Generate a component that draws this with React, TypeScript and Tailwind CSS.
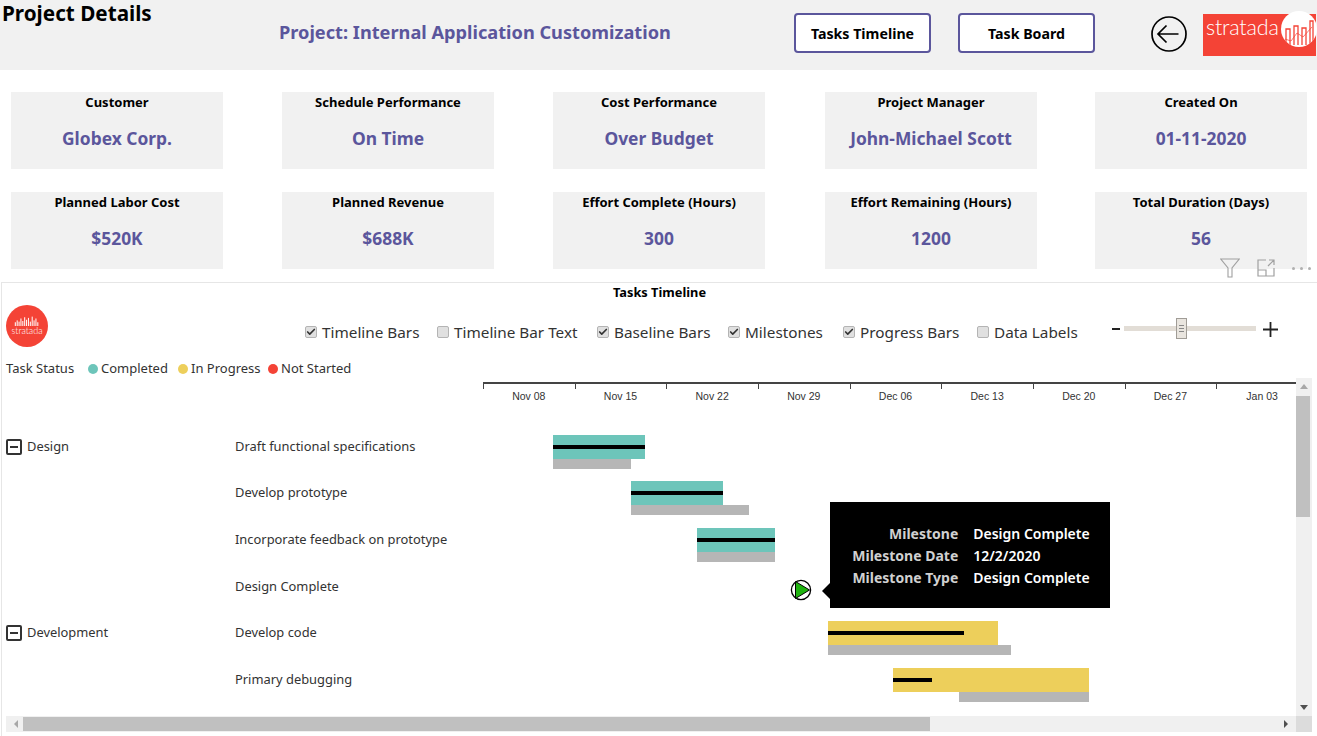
import * as React from "react";
import { Check } from "lucide-react";

const kpis = [
  { label: "Customer", value: "Globex Corp." },
  { label: "Schedule Performance", value: "On Time" },
  { label: "Cost Performance", value: "Over Budget" },
  { label: "Project Manager", value: "John-Michael Scott" },
  { label: "Created On", value: "01-11-2020" },
  { label: "Planned Labor Cost", value: "$520K" },
  { label: "Planned Revenue", value: "$688K" },
  { label: "Effort Complete (Hours)", value: "300" },
  { label: "Effort Remaining (Hours)", value: "1200" },
  { label: "Total Duration (Days)", value: "56" },
];

const toggles = [
  { label: "Timeline Bars", checked: true, width: "w-[132px]" },
  { label: "Timeline Bar Text", checked: false, width: "w-[160px]" },
  { label: "Baseline Bars", checked: true, width: "w-[131px]" },
  { label: "Milestones", checked: true, width: "w-[115px]" },
  { label: "Progress Bars", checked: true, width: "w-[134px]" },
  { label: "Data Labels", checked: false, width: "w-[120px]" },
];

const dates = ["Nov 08", "Nov 15", "Nov 22", "Nov 29", "Dec 06", "Dec 13", "Dec 20", "Dec 27", "Jan 03"];

const TEAL = "#6dc5ba";
const YELLOW = "#edcf5b";

// x values are relative to the start of the time axis
const rows = [
  { group: "Design", task: "Draft functional specifications", h: "h-[46px]", color: TEAL, bar: [70, 92], progress: 92, base: [70, 78] },
  { group: "", task: "Develop prototype", h: "h-[47px]", color: TEAL, bar: [148, 92], progress: 92, base: [148, 118] },
  { group: "", task: "Incorporate feedback on prototype", h: "h-[47px]", color: TEAL, bar: [214, 78], progress: 78, base: [214, 78] },
  { group: "", task: "Design Complete", h: "h-[46px]", milestone: true },
  { group: "Development", task: "Develop code", h: "h-[47px]", color: YELLOW, bar: [345, 170], progress: 136, base: [345, 183] },
  { group: "", task: "Primary debugging", h: "h-[47px]", color: YELLOW, bar: [410, 196], progress: 39, base: [476, 130] },
];

function Wordmark({ className }: { className: string }) {
  return <span className={className} style={{ fontFamily: "Lato, sans-serif", fontWeight: 300 }}>stratada</span>;
}

function Skyline({ color, className }: { color: string; className: string }) {
  const heights = [6, 9, 7, 12, 8, 14, 10, 13, 7, 15, 9, 12, 6];
  return (
    <svg viewBox="0 0 39 16" className={className}>
      {heights.map((h, i) => (
        <rect key={i} x={i * 3} y={16 - h} width="1.6" height={h} fill={color} />
      ))}
    </svg>
  );
}

function LogoBars() {
  return (
    <svg viewBox="0 0 30 26" className="h-[26px] w-[30px]" fill="none" stroke="#f44336" strokeWidth="1.3">
      <path d="M2 26V10h4v16M10 26V7h4v19M18 26V9h4v17M26 26V2h3v24" />
      <path d="M1 20l6 2 6-8 6 4 9-10" strokeWidth="0.7" />
    </svg>
  );
}

function ToggleBox({ checked }: { checked: boolean }) {
  return (
    <span className="mr-[5px] flex h-[12px] w-[12px] shrink-0 items-center justify-center rounded-[2px] border border-[#b4b4b4] bg-[#e0e0e0]">
      {checked && <Check className="h-[10px] w-[10px] text-[#333333]" strokeWidth={4} />}
    </span>
  );
}

function GroupBox() {
  return (
    <span className="mr-[5px] flex h-[16px] w-[16px] items-center justify-center rounded-[2px] border-2 border-[#333333]">
      <span className="h-[2px] w-[8px] bg-[#333333]" />
    </span>
  );
}

function Milestone() {
  return (
    <svg viewBox="0 0 22 22" className="absolute left-[307px] top-[16px] h-[22px] w-[22px]">
      <circle cx="11" cy="11" r="9.6" fill="white" stroke="black" strokeWidth="1.3" />
      <path d="M5.500 2.500 L19.500 11 L5.500 19.500 Z" fill="#1fb30f" stroke="black" strokeWidth="1" />
    </svg>
  );
}

export default function App() {
  return (
    <div className="flex h-[736px] w-[1317px] flex-col overflow-hidden bg-white text-black" style={{ fontFamily: '"Noto Sans", sans-serif' }}>
      <header className="flex h-[70px] shrink-0 bg-[#f1f1f1]">
        <h1 className="ml-[2px] w-[277px] text-[20.700px] font-bold leading-[27px]">Project Details</h1>
        <p className="mt-[19px] w-[515px] text-[18.200px] font-bold leading-[26px] text-[#5b569c]">Project: Internal Application Customization</p>
        <button className="mt-[13px] h-[40px] w-[137px] rounded-[4px] border-2 border-[#5b569c] bg-white pt-[1px] text-[14.200px] font-bold">Tasks Timeline</button>
        <button className="ml-[27px] mt-[13px] h-[40px] w-[137px] rounded-[4px] border-2 border-[#5b569c] bg-white pt-[1px] text-[14.200px] font-bold">Task Board</button>
        <svg viewBox="0 0 36 36" className="ml-[56px] mt-[16px] h-[36px] w-[36px]" fill="none" stroke="black" strokeWidth="1.7">
          <circle cx="18" cy="18" r="17" />
          <path d="M27.500 18H7M15.500 9.500 7 18l8.500 8.500" />
        </svg>
        <div className="relative ml-[16px] mt-[14px] flex h-[42px] w-[113px] items-start bg-[#f44336] pl-[3px]">
          <Wordmark className="text-[21.500px] leading-[26px] tracking-[-0.2px] text-white" />
          <div className="absolute right-[-1px] top-[-3px] flex h-[36px] w-[36px] items-end justify-center overflow-hidden rounded-full bg-white pb-[2px]">
            <LogoBars />
          </div>
        </div>
      </header>

      <section className="grid shrink-0 grid-cols-[repeat(5,212px)] gap-x-[59px] gap-y-[23px] pl-[11px] pt-[22px]">
        {kpis.map((k) => (
          <div key={k.label} className="flex h-[77px] flex-col items-center bg-[#f1f1f1] nth-[5n+4]:translate-x-px">
            <span className="mt-[1px] text-[13px] font-bold leading-[19px]">{k.label}</span>
            <span className="mt-[13px] text-[17.400px] font-bold leading-[26px] text-[#5b569c]">{k.value}</span>
          </div>
        ))}
      </section>

      <section className="relative ml-[1px] mt-[13px] flex min-h-0 flex-1 flex-col border-l border-t border-[#e6e6e6]">
        <div className="absolute right-[6px] top-[-25px] flex items-center gap-[17px]">
          <svg viewBox="0 0 20 20" className="h-[20px] w-[20px]" fill="none" stroke="#a0a0a0" strokeWidth="1.100">
            <path d="M.800 1h18.400l-7.200 9v9H8v-9z" />
          </svg>
          <svg viewBox="0 0 18 18" className="h-[18px] w-[18px]" fill="none" stroke="#a0a0a0" strokeWidth="1.200">
            <path d="M9 1H1v16h16V9M1 11h8v6M11 7l6-6M12 1h5v5" />
          </svg>
          <div className="flex gap-[5px]">
            <span className="h-[3px] w-[3px] rounded-full bg-[#b0b0b0]" />
            <span className="h-[3px] w-[3px] rounded-full bg-[#b0b0b0]" />
            <span className="h-[3px] w-[3px] rounded-full bg-[#b0b0b0]" />
          </div>
        </div>

        <h2 className="h-[22px] text-center text-[12.800px] font-bold leading-[18px]">Tasks Timeline</h2>

        <div className="flex h-[42px] shrink-0">
          <div className="ml-[4px] flex h-[42px] w-[42px] flex-col items-center justify-center rounded-full bg-[#f44336]">
            <Skyline color="white" className="h-[10px] w-[30px]" />
            <Wordmark className="text-[9px] leading-[10px] text-white" />
          </div>
          <div className="ml-[257px] flex pt-[17px]">
            {toggles.map((t) => (
              <label key={t.label} className={`flex h-[20px] items-center text-[15.300px] text-[#333333] ${t.width}`}>
                <ToggleBox checked={t.checked} />
                {t.label}
              </label>
            ))}
          </div>
          <div className="ml-[15px] flex h-[42px] items-center pt-[4px]">
            <span className="mr-[4px] mt-[2px] h-[2px] w-[8px] bg-[#222222]" />
            <div className="relative h-[5px] w-[132px] bg-[#e2ddd6]">
              <span className="absolute left-[52px] top-[-8px] flex h-[21px] w-[11px] flex-col items-center justify-center gap-[2px] border border-[#a09c96] bg-[#e9e5df]">
                <span className="h-px w-[5px] bg-[#888888]" />
                <span className="h-px w-[5px] bg-[#888888]" />
                <span className="h-px w-[5px] bg-[#888888]" />
              </span>
            </div>
            <svg viewBox="0 0 15 15" className="ml-[7px] mt-[2px] h-[15px] w-[15px]" stroke="#222222" strokeWidth="1.800">
              <path d="M0 7.500h15M7.500 0v15" />
            </svg>
          </div>
        </div>

        <div className="flex h-[24px] shrink-0 items-center pl-[4px] pt-[19px] text-[13px] text-[#333333]">
          <span className="w-[82px]">Task Status</span>
          <span className="mr-[3px] h-[10px] w-[10px] rounded-full bg-[#6dc5ba]" />
          <span className="w-[77px]">Completed</span>
          <span className="mr-[3px] h-[10px] w-[10px] rounded-full bg-[#edcf5b]" />
          <span className="w-[77px]">In Progress</span>
          <span className="mr-[3px] h-[10px] w-[10px] rounded-full bg-[#f44336]" />
          <span>Not Started</span>
        </div>

        <div className="ml-[481px] mt-[11px] flex h-[32px] w-[813px] shrink-0 border-t-2 border-[#444444]">
          {dates.map((d) => (
            <div key={d} className="relative w-[91.670px] shrink-0 pt-[5px] text-center text-[10.500px] leading-[14px] text-[#333333]" style={{ fontFamily: '"Liberation Sans", sans-serif' }}>
              <span className="absolute left-0 top-0 h-[5px] w-px bg-[#444444]" />
              {d}
            </div>
          ))}
        </div>

        <div className="mt-[9px] min-h-0 flex-1 overflow-hidden">
          {rows.map((r) => (
            <div key={r.task} className={`flex ${r.h}`}>
              <div className="flex h-[46px] w-[233px] shrink-0 items-center pl-[4px] pt-[2px] text-[12.900px] text-[#333333]">
                {r.group && <GroupBox />}
                {r.group}
              </div>
              <div className="flex h-[46px] w-[248px] shrink-0 items-center pt-[2px] text-[12.900px] text-[#333333]">{r.task}</div>
              <div className="relative h-[46px] w-[812px] shrink-0">
                {r.bar && (
                  <>
                    <span className="absolute top-[12px] h-[24px]" style={{ left: r.bar[0], width: r.bar[1], background: r.color }} />
                    <span className="absolute top-[22px] h-[4px] bg-black" style={{ left: r.bar[0], width: r.progress }} />
                    <span className="absolute top-[36px] h-[10px] bg-[#b6b6b6]" style={{ left: r.base![0], width: r.base![1] }} />
                  </>
                )}
                {r.milestone && <Milestone />}
              </div>
            </div>
          ))}
        </div>

        <div className="absolute right-[5px] top-[95px] flex h-[338px] w-[16px] flex-col items-center bg-[#f0f0f0]">
          <span className="mt-[6px] h-0 w-0 border-x-[4px] border-b-[5px] border-x-transparent border-b-[#a8a8a8]" />
          <span className="mt-[7px] h-[121px] w-[14px] self-start bg-[#c0c0c0]" />
          <span className="mb-[6px] mt-auto h-0 w-0 border-x-[4px] border-t-[5px] border-x-transparent border-t-[#505050]" />
        </div>

        <div className="absolute left-[4px] right-[5px] top-[433px] flex h-[16px] items-center bg-[#f0f0f0]">
          <span className="ml-[8px] h-0 w-0 border-y-[4px] border-r-[4px] border-y-transparent border-r-[#a8a8a8]" />
          <span className="ml-[5px] h-[14px] w-[907px] bg-[#c0c0c0]" />
          <span className="ml-auto mr-[24px] h-0 w-0 border-y-[4px] border-l-[4px] border-y-transparent border-l-[#505050]" />
          <span className="absolute right-0 top-0 h-[16px] w-[16px] bg-[#dcdcdc]" />
        </div>

        <div className="absolute left-[828px] top-[219px] flex h-[106px] w-[280px] items-center justify-center bg-black pl-[2px] text-[14px] leading-[22px] text-white">
          <span className="absolute left-[-8px] top-[81px] h-0 w-0 border-y-[8px] border-r-[8px] border-y-transparent border-r-black" />
          <div className="flex flex-col items-end pr-[15px] pt-[1px] font-bold text-[#d0d0d0]">
            <span>Milestone</span>
            <span>Milestone Date</span>
            <span>Milestone Type</span>
          </div>
          <div className="flex flex-col pt-[1px] font-semibold">
            <span>Design Complete</span>
            <span>12/2/2020</span>
            <span>Design Complete</span>
          </div>
        </div>
      </section>
    </div>
  );
}
